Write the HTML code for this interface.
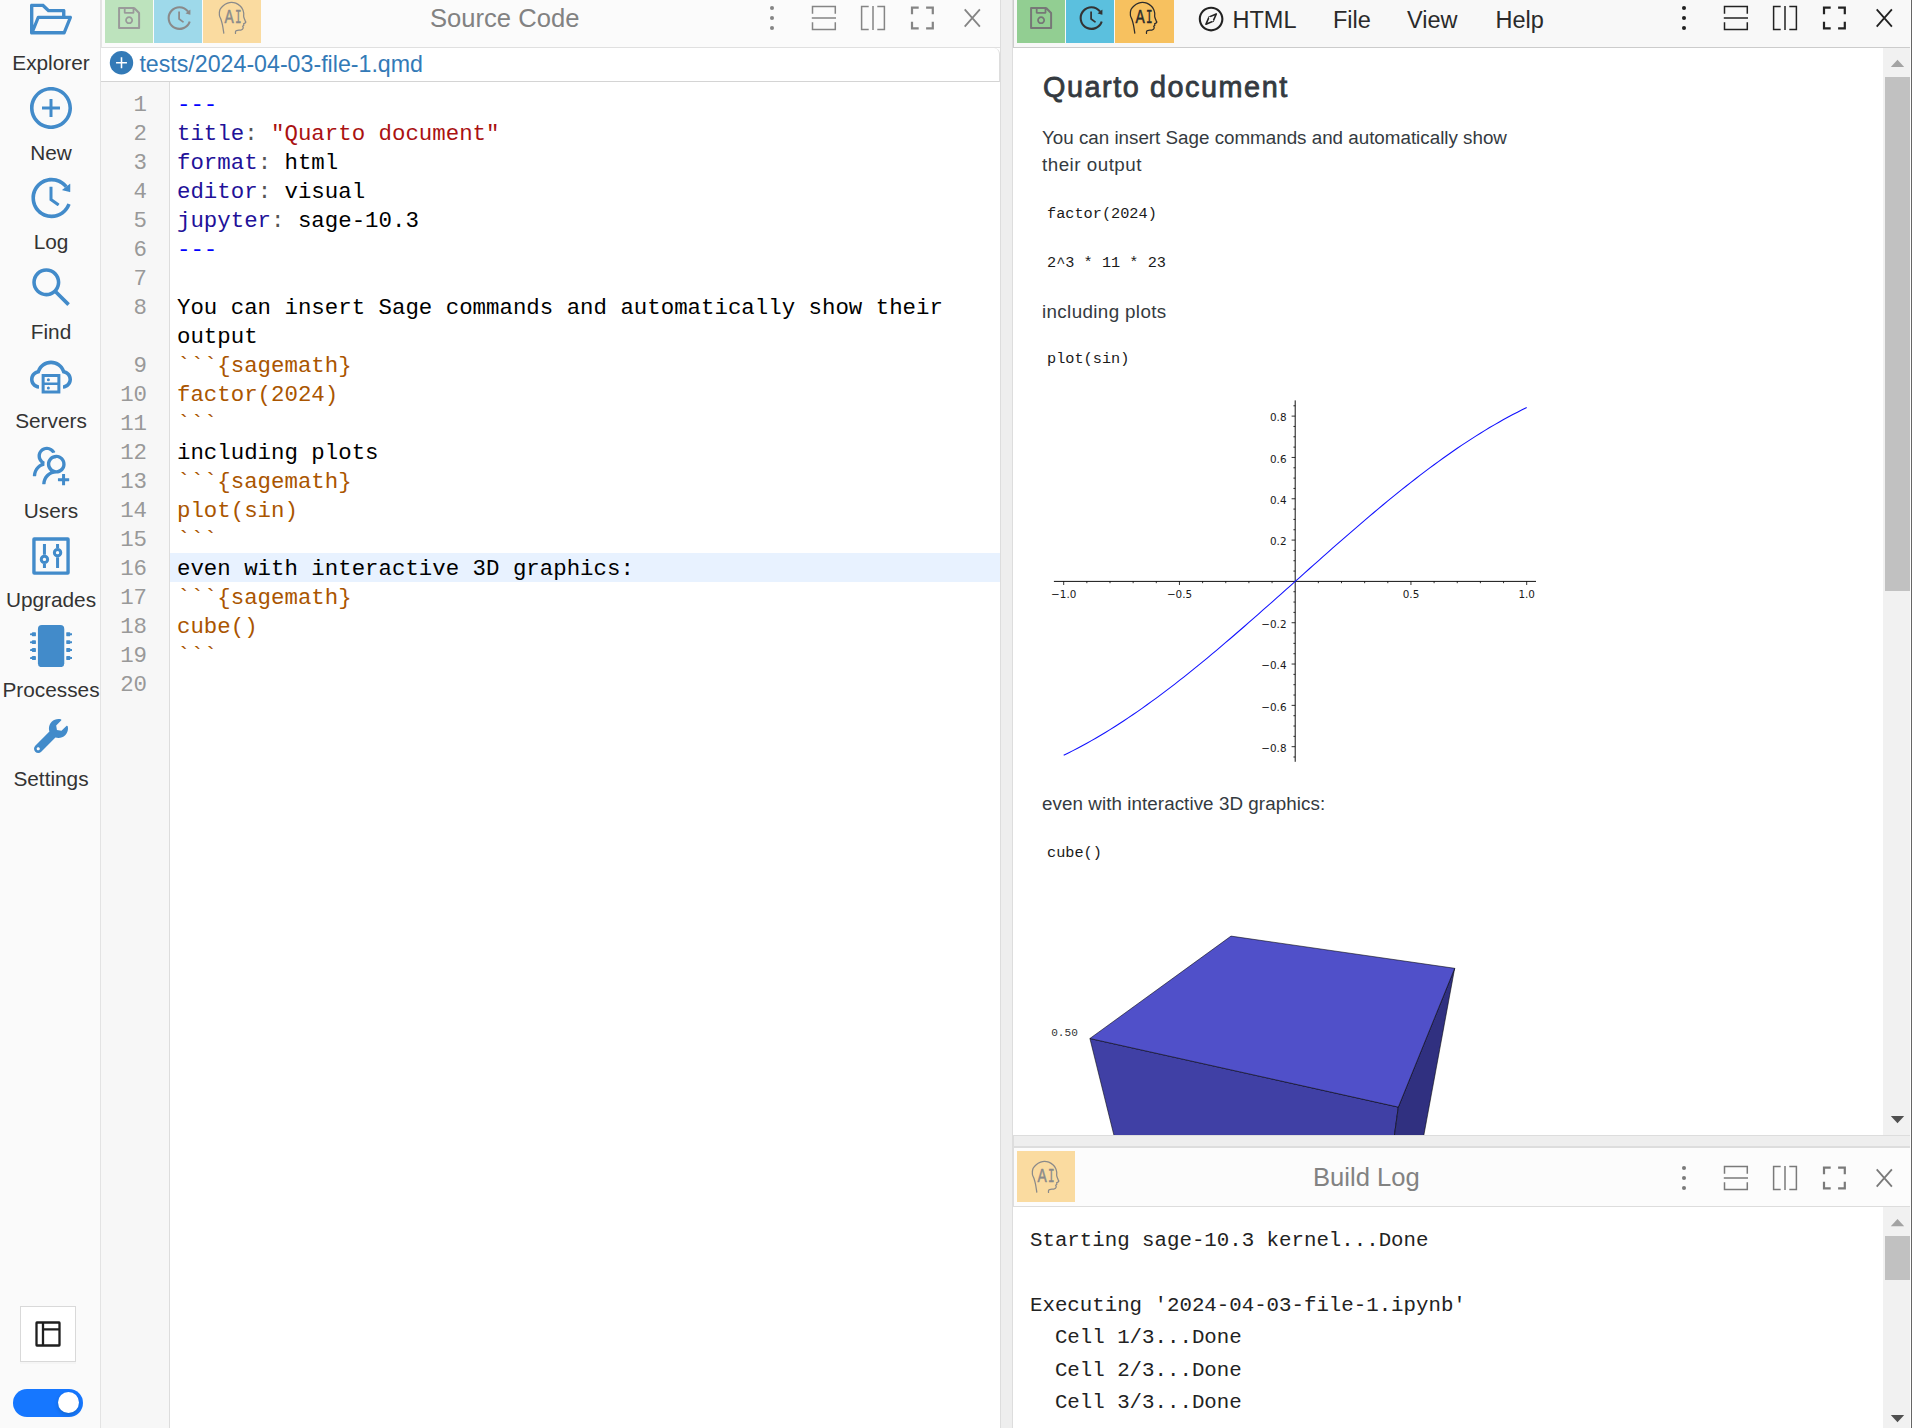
<!DOCTYPE html>
<html lang="en">
<head>
<meta charset="utf-8">
<title>tests/2024-04-03-file-1.qmd</title>
<style>
*{box-sizing:border-box;margin:0;padding:0}
html,body{width:1912px;height:1428px;overflow:hidden;background:#fff}
body{position:relative;font-family:"Liberation Sans",sans-serif;color:#333}
.abs{position:absolute}
/* sidebar */
#side{position:absolute;left:0;top:0;width:101px;height:1428px;background:#fafafa;border-right:1px solid #e3e3e3}
.sb{position:absolute;left:0;width:100px;text-align:center;font-size:20.8px;line-height:24px;color:#333;white-space:nowrap}
.sbi{position:absolute;left:0;width:100px;height:48px}
.sbi svg{position:absolute;left:26px;top:0;width:48px;height:48px;overflow:visible}
/* frames */
.tb{position:absolute;background:#fafafa;border-bottom:1px solid #ccc}
.btn{position:absolute;top:-8px;height:51px}
.ttl{position:absolute;color:#828282;font-size:25.6px;line-height:30px;white-space:nowrap}
.ico{position:absolute;width:30px;height:30px;overflow:visible}
/* editor */
#cm{position:absolute;left:101px;top:82px;width:899px;height:1346px;background:#fff;font-family:"Liberation Mono",monospace;font-size:22.4px}
#gut{position:absolute;left:0;top:0;width:69px;height:1346px;background:#f7f7f7;border-right:1px solid #ddd}
.ln{position:absolute;left:0;width:46px;text-align:right;color:#999;height:29px;line-height:29px;white-space:pre}
.cl{position:absolute;left:76px;height:29px;line-height:29px;white-space:pre;color:#000}
.k{color:#219}.p{color:#555}.s{color:#a11}.m{color:#00f}.c{color:#a50}
/* html preview */
#doc{position:absolute;left:1013px;top:48px;width:870px;height:1087px;background:#fff;overflow:hidden;color:#343a40}
#doc p,#doc h1,#doc pre{position:absolute;white-space:pre}
#doc p{font-size:18.8px;line-height:28px;left:29px}
#doc pre{font-family:"Liberation Mono",monospace;font-size:15.25px;line-height:20px;left:34px;color:#1a1a1a}
.sbar{position:absolute;background:#f1f1f1}
.thumb{position:absolute;background:#c1c1c1}
/* log */
#log{position:absolute;left:1013px;top:1207px;width:870px;height:221px;background:#fff;font-family:"Liberation Mono",monospace;font-size:20.76px;color:#222}
#log div{position:absolute;left:17px;white-space:pre;height:32px;line-height:32px}
</style>
</head>
<body>
<div id="side">
<svg class="abs" style="left:27px;top:-5.4px;width:48px;height:48px" viewBox="0 0 1024 1024" fill="#428bca"><path d="M928 444H820V330.4c0-17.7-14.3-32-32-32H473L355.700 186.200a8.150 8.150 0 00-5.500-2.200H96c-17.700 0-32 14.300-32 32v592c0 17.700 14.300 32 32 32h698c13 0 24.800-7.900 29.700-20l134-332c1.500-3.800 2.300-7.900 2.300-12 0-17.700-14.300-32-32-32zM136 256h188.500l119.600 114.400H748V444H238c-13 0-24.800 7.900-29.700 20L136 643.200V256zm635.300 512H159l103.300-256h612.400L771.300 768z"/></svg>
<div class="sb" style="left:1px;top:51.4px">Explorer</div>
<svg class="abs" style="left:27px;top:84.1px;width:48px;height:48px" viewBox="0 0 1024 1024" fill="#428bca"><path d="M696 480H544V328c0-4.400-3.600-8-8-8h-48c-4.400 0-8 3.600-8 8v152H328c-4.400 0-8 3.600-8 8v48c0 4.400 3.600 8 8 8h152v152c0 4.400 3.600 8 8 8h48c4.400 0 8-3.600 8-8V544h152c4.400 0 8-3.600 8-8v-48c0-4.400-3.600-8-8-8zM512 64C264.600 64 64 264.600 64 512s200.600 448 448 448 448-200.600 448-448S759.400 64 512 64zm0 820c-205.400 0-372-166.600-372-372s166.600-372 372-372 372 166.600 372 372-166.600 372-372 372z"/></svg>
<div class="sb" style="left:1px;top:140.9px">New</div>
<svg class="abs" style="left:27px;top:173.6px;width:48px;height:48px" viewBox="0 0 1024 1024" fill="#428bca"><path d="M536.100 273H488c-4.400 0-8 3.600-8 8v275.300c0 2.600 1.200 5 3.300 6.500l165.300 120.700c3.600 2.600 8.600 1.900 11.200-1.700l28.600-39c2.700-3.700 1.900-8.700-1.700-11.200L544.100 528.500V281c0-4.400-3.600-8-8-8zm219.800 75.200l156.800 38.300c5 1.200 9.900-2.600 9.900-7.700l.800-161.500c0-6.700-7.700-10.500-12.900-6.300L752.900 334.100a8 8 0 003 14.100zm167.700 301.100l-56.700-19.500a8 8 0 00-10.100 4.800c-1.900 5.100-3.900 10.100-6 15.100-17.800 42.100-43.300 80-75.900 112.500a353 353 0 01-112.500 75.900 352.180 352.180 0 01-137.700 27.800c-47.800 0-94.100-9.300-137.700-27.800a353 353 0 01-112.500-75.900c-32.500-32.500-58-70.400-75.900-112.500A353.440 353.440 0 01171 512c0-47.800 9.300-94.200 27.800-137.800 17.800-42.100 43.300-80 75.900-112.500a353 353 0 01112.500-75.900C430.600 167.300 477 158 524.800 158s94.100 9.300 137.700 27.800A353 353 0 01775 261.700c10.200 10.300 19.800 21 28.600 32.300l59.800-46.800C784.700 146.600 662.200 81.900 524.600 82 285 82.100 92.600 276.700 95 516.400 97.400 751.900 288.900 942 524.800 942c185.500 0 343.500-117.600 403.700-282.300 1.500-4.200-.7-8.900-4.900-10.400z"/></svg>
<div class="sb" style="left:1px;top:230.4px">Log</div>
<svg class="abs" style="left:27px;top:263.1px;width:48px;height:48px" viewBox="0 0 1024 1024" fill="#428bca"><path d="M909.600 854.500L649.900 594.800C690.200 542.700 712 479 712 412c0-80.200-31.300-155.400-87.900-212.100-56.600-56.700-132-87.900-212.100-87.900s-155.500 31.300-212.100 87.900C143.200 256.500 112 331.800 112 412c0 80.100 31.300 155.500 87.900 212.100C256.500 680.800 331.800 712 412 712c67 0 130.600-21.800 182.700-62l259.700 259.600a8.200 8.200 0 0011.600 0l43.600-43.500a8.200 8.200 0 000-11.600zM570.400 570.400C528 612.700 471.800 636 412 636s-116-23.300-158.400-65.600C211.300 528 188 471.800 188 412s23.300-116.100 65.600-158.400C296 211.300 352.200 188 412 188s116.100 23.200 158.400 65.600S636 352.200 636 412s-23.300 116.100-65.600 158.400z"/></svg>
<div class="sb" style="left:1px;top:319.9px">Find</div>
<svg class="abs" style="left:27px;top:352.6px;width:48px;height:48px" viewBox="0 0 1024 1024" fill="#428bca"><path d="M704 446H320c-4.400 0-8 3.600-8 8v402c0 4.400 3.600 8 8 8h384c4.400 0 8-3.600 8-8V454c0-4.400-3.600-8-8-8zm-328 64h272v117H376V510zm272 290H376V683h272v117z"/><path d="M424 748a32 32 0 1064 0 32 32 0 10-64 0zm0-178a32 32 0 1064 0 32 32 0 10-64 0z"/><path d="M811.400 368.900C765.600 248 648.900 162 512.200 162S258.800 247.900 213 368.800C126.900 391.500 63.500 470.200 64 563.600 64.600 668 145.600 752.900 247.600 762c4.700.4 8.700-3.300 8.700-8v-60.400c0-4-3-7.400-7-7.900-27-3.400-52.500-15.200-72.100-34.500-24-23.500-37.200-55.100-37.200-88.600 0-28 9.100-54.400 26.200-76.400 16.700-21.400 40.200-36.900 66.100-43.700l37.900-10 13.900-36.700c8.600-22.800 20.600-44.200 35.700-63.500 14.900-19.200 32.600-36 52.400-50 41.100-28.900 89.500-44.200 140-44.200s98.900 15.300 140 44.300c19.900 14 37.500 30.800 52.400 50 15.100 19.300 27.100 40.700 35.700 63.500l13.800 36.600 37.800 10c54.200 14.400 92.100 63.700 92.100 120 0 33.600-13.200 65.100-37.200 88.600-19.500 19.200-44.900 31.100-71.900 34.500-4 .5-6.900 3.900-6.900 7.900V754c0 4.700 4.100 8.400 8.800 8 101.700-9.200 182.500-94 183.200-198.200.6-93.400-62.700-172.100-148.600-194.900z"/></svg>
<div class="sb" style="left:1px;top:409.4px">Servers</div>
<svg class="abs" style="left:27px;top:442.1px;width:48px;height:48px" viewBox="0 0 1024 1024" fill="#428bca"><path d="M892 772h-80v-80c0-4.400-3.600-8-8-8h-48c-4.400 0-8 3.600-8 8v80h-80c-4.400 0-8 3.600-8 8v48c0 4.400 3.600 8 8 8h80v80c0 4.400 3.600 8 8 8h48c4.400 0 8-3.600 8-8v-80h80c4.400 0 8-3.600 8-8v-48c0-4.400-3.600-8-8-8zM373.500 498.400c-.9-8.700-1.400-17.500-1.400-26.400 0-15.900 1.500-31.400 4.300-46.500.7-3.600-1.200-7.300-4.500-8.800-13.600-6.100-26.100-14.500-36.900-25.100a127.540 127.540 0 01-38.700-95.400c.9-32.100 13.800-62.600 36.300-85.600 24.700-25.300 57.900-39.100 93.200-38.700 31.900.3 62.700 12.600 86 34.400 7.900 7.400 14.700 15.600 20.400 24.400 2 3.100 5.900 4.400 9.300 3.200 17.600-6.100 36.200-10.400 55.300-12.400 5.600-.6 8.800-6.600 6.300-11.600-32.500-64.300-98.900-108.700-175.700-109.900-110.800-1.700-203.200 89.200-203.200 200 0 62.800 28.900 118.800 74.200 155.500-31.800 14.700-61.100 35-86.500 60.400-54.800 54.700-85.800 126.900-87.800 204a8 8 0 008 8.200h56.100c4.300 0 7.900-3.400 8-7.700 1.900-58 25.400-112.300 66.700-153.500 29.400-29.400 65.400-49.800 104.700-59.700 3.800-1.100 6.400-4.800 5.900-8.800zM824 472c0-109.400-87.900-198.300-196.900-200C516.300 270.300 424 361.200 424 472c0 62.800 29 118.800 74.200 155.500a300.950 300.950 0 00-86.400 60.400C357 742.600 326 814.800 324 891.800a8 8 0 008 8.200h56c4.300 0 7.900-3.400 8-7.700 1.900-58 25.400-112.300 66.700-153.500C505.800 695.700 563 672 624 672c110.400 0 200-89.500 200-200zm-109.500 90.500C690.300 586.700 658.200 600 624 600s-66.300-13.300-90.500-37.500a127.260 127.260 0 01-37.500-91.800c.3-32.800 13.400-64.500 36.300-88 24-24.600 56.100-38.300 90.400-38.700 33.900-.3 66.800 12.900 91 36.600 24.800 24.300 38.400 56.800 38.400 91.400-.1 34.200-13.400 66.300-37.600 90.500z"/></svg>
<div class="sb" style="left:1px;top:498.9px">Users</div>
<svg class="abs" style="left:27px;top:531.6px;width:48px;height:48px" viewBox="0 0 1024 1024" fill="none" stroke="#428bca" stroke-width="72"><rect x="148" y="148" width="728" height="728" rx="6"/><path d="M372 256V484M372 684V768M652 256V340M652 540V768" stroke-width="64"/><circle cx="372" cy="584" r="68" stroke-width="64"/><circle cx="652" cy="440" r="68" stroke-width="64"/></svg>
<div class="sb" style="left:1px;top:588.4px">Upgrades</div>
<svg class="abs" style="left:29.9px;top:625px;width:42.2px;height:42.2px" viewBox="0 0 512 512" fill="#428bca"><rect x="96" y="0" width="320" height="512" rx="48"/><rect x="440" y="88" width="48" height="48" rx="6"/><rect x="484" y="100" width="28" height="24" rx="6"/><rect x="24" y="88" width="48" height="48" rx="6"/><rect x="0" y="100" width="28" height="24" rx="6"/><rect x="440" y="184" width="48" height="48" rx="6"/><rect x="484" y="196" width="28" height="24" rx="6"/><rect x="24" y="184" width="48" height="48" rx="6"/><rect x="0" y="196" width="28" height="24" rx="6"/><rect x="440" y="280" width="48" height="48" rx="6"/><rect x="484" y="292" width="28" height="24" rx="6"/><rect x="24" y="280" width="48" height="48" rx="6"/><rect x="0" y="292" width="28" height="24" rx="6"/><rect x="440" y="376" width="48" height="48" rx="6"/><rect x="484" y="388" width="28" height="24" rx="6"/><rect x="24" y="376" width="48" height="48" rx="6"/><rect x="0" y="388" width="28" height="24" rx="6"/></svg>
<div class="sb" style="left:1px;top:677.9px">Processes</div>
<svg class="abs" style="left:34.3px;top:719.1px;width:34px;height:34px" viewBox="0 0 512 512" fill="#428bca"><path d="M507.730 109.100c-2.240-9.030-13.540-12.090-20.120-5.510l-74.360 74.360-67.880-11.310-11.310-67.880 74.360-74.360c6.620-6.620 3.430-17.900-5.660-20.160-47.380-11.740-99.550.91-136.580 37.930-39.640 39.640-50.550 97.100-34.050 147.200L18.740 402.760c-24.990 24.990-24.990 65.510 0 90.500 24.990 24.990 65.510 24.990 90.500 0l213.210-213.210c50.120 16.710 107.470 5.680 147.370-34.220 37.070-37.070 49.700-89.320 37.910-136.730zM64 472c-13.250 0-24-10.750-24-24 0-13.260 10.750-24 24-24s24 10.740 24 24c0 13.250-10.750 24-24 24z"/></svg>
<div class="sb" style="left:1px;top:767.4px">Settings</div>
<div class="abs" style="left:20px;top:1306px;width:56px;height:56px;background:#fff;border:1px solid #d9d9d9;box-shadow:0 2px 0 rgba(0,0,0,0.02)"></div>
<svg class="abs" style="left:35px;top:1321px;width:26px;height:26px" viewBox="0 0 26 26" fill="none" stroke="#1f1f1f" stroke-width="2.300"><rect x="1.5" y="1.500" width="23" height="23" rx="0.400"/><path d="M8 1.5V24.500M8 8.300H24.500"/></svg>
<div class="abs" style="left:13px;top:1389px;width:70px;height:28px;border-radius:14px;background:#1677ff"></div>
<div class="abs" style="left:58px;top:1391.700px;width:21px;height:21px;border-radius:11px;background:#fff;box-shadow:0 2px 4px rgba(0,35,11,0.2)"></div>
</div>
<div class="tb" style="left:101px;top:0;width:899px;height:48px;background:#fbfbfb;border-bottom:1px solid #e0e0e0;border-left:1px solid #e4e4e4"></div>
<div class="abs" style="left:105px;top:-8px;width:48px;height:51px;background:#bde3bd"></div>
<div class="abs" style="left:154px;top:-8px;width:48px;height:51px;background:#9ed9ea"></div>
<div class="abs" style="left:203px;top:-8px;width:58px;height:51px;background:#fadba0"></div>
<svg class="abs" style="left:115px;top:4px;width:28.2px;height:28.2px" viewBox="0 0 1024 1024" fill="#9a9a9a"><path d="M893.300 293.300L730.700 130.700c-7.500-7.500-16.700-13-26.700-16V112H144c-17.700 0-32 14.300-32 32v736c0 17.700 14.300 32 32 32h736c17.700 0 32-14.300 32-32V338.500c0-17-6.700-33.200-18.700-45.200zM384 184h256v104H384V184zm456 656H184V184h136v136c0 17.700 14.300 32 32 32h320c17.700 0 32-14.300 32-32V205.800l136 136V840zM512 442c-79.500 0-144 64.500-144 144s64.500 144 144 144 144-64.500 144-144-64.500-144-144-144zm0 224c-44.200 0-80-35.800-80-80s35.800-80 80-80 80 35.800 80 80-35.800 80-80 80z"/></svg>
<svg class="abs" style="left:164.5px;top:4.1px;width:28.2px;height:28.2px" viewBox="0 0 1024 1024" fill="#8a8a8a"><path d="M536.100 273H488c-4.400 0-8 3.600-8 8v275.300c0 2.600 1.200 5 3.300 6.500l165.300 120.700c3.600 2.600 8.600 1.900 11.200-1.700l28.600-39c2.700-3.700 1.900-8.700-1.700-11.200L544.100 528.500V281c0-4.400-3.600-8-8-8zm219.800 75.200l156.800 38.300c5 1.200 9.900-2.600 9.900-7.700l.800-161.500c0-6.700-7.700-10.500-12.900-6.300L752.900 334.100a8 8 0 003 14.100zm167.700 301.100l-56.700-19.500a8 8 0 00-10.100 4.800c-1.900 5.100-3.900 10.100-6 15.100-17.800 42.100-43.300 80-75.900 112.500a353 353 0 01-112.500 75.900 352.180 352.180 0 01-137.700 27.800c-47.800 0-94.100-9.300-137.700-27.800a353 353 0 01-112.500-75.900c-32.500-32.500-58-70.400-75.900-112.500A353.440 353.440 0 01171 512c0-47.800 9.300-94.200 27.800-137.800 17.800-42.100 43.300-80 75.900-112.500a353 353 0 01112.500-75.900C430.600 167.300 477 158 524.800 158s94.100 9.300 137.700 27.800A353 353 0 01775 261.700c10.200 10.300 19.800 21 28.600 32.300l59.800-46.800C784.700 146.600 662.200 81.900 524.600 82 285 82.100 92.600 276.700 95 516.400 97.400 751.900 288.900 942 524.800 942c185.500 0 343.500-117.600 403.700-282.300 1.500-4.200-.7-8.900-4.900-10.400z"/></svg>
<svg class="abs" style="left:202.8px;top:0px;width:60px;height:45px;overflow:visible" viewBox="0 0 60 45" fill="none" stroke="#8a8a8a" stroke-width="1.25" stroke-linecap="round" stroke-linejoin="round"><path d="M20.80 33.10C20.58 31.78 19.97 27.47 19.50 25.20C19.03 22.93 18.52 21.15 18.00 19.50C17.48 17.85 16.57 16.97 16.40 15.30C16.23 13.63 16.37 11.10 17.00 9.50C17.63 7.90 18.93 6.75 20.20 5.70C21.47 4.65 23.23 3.75 24.60 3.20C25.97 2.65 27.03 2.40 28.40 2.40C29.77 2.40 31.33 2.60 32.80 3.20C34.27 3.80 36.05 4.95 37.20 6.00C38.35 7.05 39.12 8.30 39.70 9.50C40.28 10.70 40.53 12.00 40.70 13.20C40.87 14.40 40.53 15.65 40.70 16.70C40.87 17.75 41.37 18.60 41.70 19.50C42.03 20.40 42.53 21.67 42.70 22.10"/><path d="M42.70 22.10C42.60 22.27 42.43 22.85 42.10 23.10C41.77 23.35 40.92 23.25 40.70 23.60C40.48 23.95 40.97 24.77 40.80 25.20C40.63 25.63 39.80 25.78 39.70 26.20C39.60 26.62 40.25 27.18 40.20 27.70C40.15 28.22 39.80 28.90 39.40 29.30C39.00 29.70 38.58 29.93 37.80 30.10C37.02 30.27 35.48 30.20 34.70 30.30C33.92 30.40 33.47 30.45 33.10 30.70C32.73 30.95 32.60 31.35 32.50 31.80C32.40 32.25 32.50 33.13 32.50 33.40"/><g font-family="Liberation Mono,monospace" font-size="20.300" font-weight="400" fill="#8a8a8a" stroke="#8a8a8a" stroke-width="0.450"><text transform="translate(21.5,22.5) scale(0.760,1)">A</text><text transform="translate(32.1,22.5) scale(0.540,1)">I</text></g></svg>
<div class="ttl" style="left:430px;top:3px">Source Code</div>
<svg class="abs" style="left:760.2px;top:0.1999999999999993px;width:232px;height:36px;overflow:visible" viewBox="0 0 232 36" fill="none" stroke="#858585" stroke-width="1.5"><circle cx="12" cy="8" r="2.050" fill="#858585" stroke="none"/><circle cx="12" cy="18" r="2.050" fill="#858585" stroke="none"/><circle cx="12" cy="28" r="2.050" fill="#858585" stroke="none"/><path d="M52.5 13.7V6.6H75.3V13.7M51.8 18H76.0M52.5 22.3V29.4H75.3V22.3"/><path d="M108.7 6.6H101.6V29.4H108.7M113 5.9V30.1M117.3 6.6H124.4V29.4H117.3"/><path stroke-width="2.200" d="M152.0 14.3V7.6H158.70000000000002M166.1 7.6H172.8V14.3M172.8 21.7V28.4H166.1M158.70000000000002 28.4H152.0V21.7"/><path stroke-width="1.800" d="M204.70000000000002 9.3L219.9 26.7M219.9 9.3L204.70000000000002 26.7"/></svg>
<div class="abs" style="left:101px;top:48px;width:899px;height:34px;background:#fff;border-bottom:1px solid #d4d4d4;border-right:1px solid #ddd;border-top-right-radius:6px"></div>
<svg class="abs" style="left:105px;top:46px;width:40px;height:34px" viewBox="0 0 40 34"><circle cx="16.500" cy="16.750" r="11.700" fill="#337ab7"/><path d="M16.500 11.300V22.200M11.050 16.750H21.950" stroke="#fff" stroke-width="1.550" fill="none"/></svg>

<div class="abs" style="left:139.400px;top:49px;font-size:23.200px;line-height:30px;color:#337ab7;white-space:nowrap">tests/2024-04-03-file-1.qmd</div>
<div id="cm"><div id="gut"></div>
<div class="ln" style="top:9.2px">1</div>
<div class="cl" style="top:9.2px"><span class="m">---</span></div>
<div class="ln" style="top:38.2px">2</div>
<div class="cl" style="top:38.2px"><span class="k">title</span><span class="p">:</span> <span class="s">"Quarto document"</span></div>
<div class="ln" style="top:67.2px">3</div>
<div class="cl" style="top:67.2px"><span class="k">format</span><span class="p">:</span> html</div>
<div class="ln" style="top:96.2px">4</div>
<div class="cl" style="top:96.2px"><span class="k">editor</span><span class="p">:</span> visual</div>
<div class="ln" style="top:125.2px">5</div>
<div class="cl" style="top:125.2px"><span class="k">jupyter</span><span class="p">:</span> sage-10.3</div>
<div class="ln" style="top:154.2px">6</div>
<div class="cl" style="top:154.2px"><span class="m">---</span></div>
<div class="ln" style="top:183.2px">7</div>
<div class="ln" style="top:212.2px">8</div>
<div class="cl" style="top:212.2px">You can insert Sage commands and automatically show their</div>
<div class="cl" style="top:241.2px">output</div>
<div class="ln" style="top:270.2px">9</div>
<div class="cl" style="top:270.2px"><span class="c">```{sagemath}</span></div>
<div class="ln" style="top:299.2px">10</div>
<div class="cl" style="top:299.2px"><span class="c">factor(2024)</span></div>
<div class="ln" style="top:328.2px">11</div>
<div class="cl" style="top:328.2px"><span class="c">```</span></div>
<div class="ln" style="top:357.2px">12</div>
<div class="cl" style="top:357.2px">including plots</div>
<div class="ln" style="top:386.2px">13</div>
<div class="cl" style="top:386.2px"><span class="c">```{sagemath}</span></div>
<div class="ln" style="top:415.2px">14</div>
<div class="cl" style="top:415.2px"><span class="c">plot(sin)</span></div>
<div class="ln" style="top:444.2px">15</div>
<div class="cl" style="top:444.2px"><span class="c">```</span></div>
<div class="abs" style="left:69px;top:471.2px;width:830px;height:28.600px;background:#e8f2ff"></div>
<div class="ln" style="top:473.2px">16</div>
<div class="cl" style="top:473.2px">even with interactive 3D graphics:</div>
<div class="ln" style="top:502.2px">17</div>
<div class="cl" style="top:502.2px"><span class="c">```{sagemath}</span></div>
<div class="ln" style="top:531.2px">18</div>
<div class="cl" style="top:531.2px"><span class="c">cube()</span></div>
<div class="ln" style="top:560.2px">19</div>
<div class="cl" style="top:560.2px"><span class="c">```</span></div>
<div class="ln" style="top:589.2px">20</div>
</div>
<div class="abs" style="left:1000px;top:0;width:13px;height:1428px;background:#eeeeee;border-left:1px solid #dddddd;border-right:1px solid #dddddd"></div>
<div class="tb" style="left:1013px;top:0;width:899px;height:48px;background:#f8f8f8;border-left:1px solid #ccc"></div>
<div class="abs" style="left:1017px;top:-8px;width:48px;height:51px;background:#92ce92"></div>
<div class="abs" style="left:1066px;top:-8px;width:48px;height:51px;background:#5bc0de"></div>
<div class="abs" style="left:1115px;top:-8px;width:59px;height:51px;background:#f7c15f"></div>
<svg class="abs" style="left:1027px;top:4px;width:28.2px;height:28.2px" viewBox="0 0 1024 1024" fill="#777"><path d="M893.300 293.300L730.700 130.700c-7.500-7.500-16.700-13-26.700-16V112H144c-17.700 0-32 14.300-32 32v736c0 17.700 14.300 32 32 32h736c17.700 0 32-14.300 32-32V338.500c0-17-6.700-33.200-18.700-45.200zM384 184h256v104H384V184zm456 656H184V184h136v136c0 17.700 14.300 32 32 32h320c17.700 0 32-14.300 32-32V205.800l136 136V840zM512 442c-79.500 0-144 64.500-144 144s64.500 144 144 144 144-64.500 144-144-64.500-144-144-144zm0 224c-44.200 0-80-35.800-80-80s35.800-80 80-80 80 35.800 80 80-35.800 80-80 80z"/></svg>
<svg class="abs" style="left:1076.5px;top:4.1px;width:28.2px;height:28.2px" viewBox="0 0 1024 1024" fill="#333"><path d="M536.100 273H488c-4.400 0-8 3.600-8 8v275.300c0 2.600 1.200 5 3.300 6.500l165.300 120.700c3.600 2.600 8.600 1.900 11.200-1.700l28.600-39c2.700-3.700 1.900-8.700-1.700-11.200L544.100 528.500V281c0-4.400-3.600-8-8-8zm219.800 75.200l156.800 38.300c5 1.200 9.900-2.600 9.900-7.700l.800-161.500c0-6.700-7.700-10.500-12.900-6.300L752.900 334.100a8 8 0 003 14.100zm167.700 301.100l-56.700-19.500a8 8 0 00-10.100 4.800c-1.900 5.100-3.900 10.100-6 15.100-17.800 42.100-43.300 80-75.900 112.500a353 353 0 01-112.500 75.900 352.180 352.180 0 01-137.700 27.800c-47.800 0-94.100-9.300-137.700-27.800a353 353 0 01-112.500-75.900c-32.500-32.500-58-70.400-75.900-112.500A353.440 353.440 0 01171 512c0-47.800 9.300-94.200 27.800-137.800 17.800-42.100 43.300-80 75.900-112.500a353 353 0 01112.500-75.900C430.600 167.300 477 158 524.800 158s94.100 9.300 137.700 27.800A353 353 0 01775 261.700c10.200 10.300 19.800 21 28.600 32.300l59.800-46.800C784.700 146.600 662.200 81.900 524.600 82 285 82.100 92.600 276.700 95 516.400 97.400 751.900 288.900 942 524.800 942c185.500 0 343.500-117.600 403.700-282.300 1.500-4.200-.7-8.900-4.900-10.400z"/></svg>
<svg class="abs" style="left:1114px;top:0px;width:60px;height:45px;overflow:visible" viewBox="0 0 60 45" fill="none" stroke="#2b2b2b" stroke-width="1.25" stroke-linecap="round" stroke-linejoin="round"><path d="M20.80 33.10C20.58 31.78 19.97 27.47 19.50 25.20C19.03 22.93 18.52 21.15 18.00 19.50C17.48 17.85 16.57 16.97 16.40 15.30C16.23 13.63 16.37 11.10 17.00 9.50C17.63 7.90 18.93 6.75 20.20 5.70C21.47 4.65 23.23 3.75 24.60 3.20C25.97 2.65 27.03 2.40 28.40 2.40C29.77 2.40 31.33 2.60 32.80 3.20C34.27 3.80 36.05 4.95 37.20 6.00C38.35 7.05 39.12 8.30 39.70 9.50C40.28 10.70 40.53 12.00 40.70 13.20C40.87 14.40 40.53 15.65 40.70 16.70C40.87 17.75 41.37 18.60 41.70 19.50C42.03 20.40 42.53 21.67 42.70 22.10"/><path d="M42.70 22.10C42.60 22.27 42.43 22.85 42.10 23.10C41.77 23.35 40.92 23.25 40.70 23.60C40.48 23.95 40.97 24.77 40.80 25.20C40.63 25.63 39.80 25.78 39.70 26.20C39.60 26.62 40.25 27.18 40.20 27.70C40.15 28.22 39.80 28.90 39.40 29.30C39.00 29.70 38.58 29.93 37.80 30.10C37.02 30.27 35.48 30.20 34.70 30.30C33.92 30.40 33.47 30.45 33.10 30.70C32.73 30.95 32.60 31.35 32.50 31.80C32.40 32.25 32.50 33.13 32.50 33.40"/><g font-family="Liberation Mono,monospace" font-size="20.300" font-weight="400" fill="#2b2b2b" stroke="#2b2b2b" stroke-width="0.450"><text transform="translate(21.5,22.5) scale(0.760,1)">A</text><text transform="translate(32.1,22.5) scale(0.540,1)">I</text></g></svg>
<svg class="abs" style="left:1197.1px;top:5.3px;width:28.2px;height:28.2px" viewBox="0 0 1024 1024" fill="#222"><path d="M512 64C264.600 64 64 264.600 64 512s200.600 448 448 448 448-200.600 448-448S759.400 64 512 64zm0 820c-205.400 0-372-166.600-372-372s166.600-372 372-372 372 166.600 372 372-166.600 372-372 372zm198.400-588.100a32 32 0 00-24.500.5L414.900 415 296.400 686c-3.600 8.200-3.600 17.500 0 25.700 3.400 7.800 9.700 13.900 17.700 17 3.800 1.500 7.700 2.200 11.700 2.200 4.400 0 8.700-.9 12.800-2.700l271-118.600 118.500-271a32.060 32.060 0 00-17.700-42.700zM576.800 534.400l26.200 26.200-42.400 42.400-26.200-26.200L380 644.400 447.500 490 422 464.400l42.400-42.400 25.500 25.500L644.400 380l-67.600 154.400z"/></svg>
<div class="abs" style="left:1232.5px;top:5.400px;font-size:23.500px;line-height:30px;color:#2a2a2a;white-space:nowrap">HTML</div>
<div class="abs" style="left:1333px;top:5.400px;font-size:23.500px;line-height:30px;color:#2a2a2a;white-space:nowrap">File</div>
<div class="abs" style="left:1407px;top:5.400px;font-size:23.500px;line-height:30px;color:#2a2a2a;white-space:nowrap">View</div>
<div class="abs" style="left:1495.5px;top:5.400px;font-size:23.500px;line-height:30px;color:#2a2a2a;white-space:nowrap">Help</div>
<svg class="abs" style="left:1672.1px;top:0.1999999999999993px;width:232px;height:36px;overflow:visible" viewBox="0 0 232 36" fill="none" stroke="#222" stroke-width="1.5"><circle cx="12" cy="8" r="2.050" fill="#222" stroke="none"/><circle cx="12" cy="18" r="2.050" fill="#222" stroke="none"/><circle cx="12" cy="28" r="2.050" fill="#222" stroke="none"/><path d="M52.5 13.7V6.6H75.3V13.7M51.8 18H76.0M52.5 22.3V29.4H75.3V22.3"/><path d="M108.7 6.6H101.6V29.4H108.7M113 5.9V30.1M117.3 6.6H124.4V29.4H117.3"/><path stroke-width="2.200" d="M152.0 14.3V7.6H158.70000000000002M166.1 7.6H172.8V14.3M172.8 21.7V28.4H166.1M158.70000000000002 28.4H152.0V21.7"/><path stroke-width="1.800" d="M204.70000000000002 9.3L219.9 26.7M219.9 9.3L204.70000000000002 26.7"/></svg>
<div id="doc">
<h1 style="left:30px;top:18.500px;font-size:28.800px;line-height:40px;font-weight:400;-webkit-text-stroke:0.8px #343a40;letter-spacing:1.55px">Quarto document</h1>
<p style="top:75.600px">You can insert Sage commands and automatically show</p>
<p style="top:103.400px;letter-spacing:0.5px">their output</p>
<pre style="top:155.500px">factor(2024)</pre>
<pre style="top:205.300px">2^3 * 11 * 23</pre>
<p style="top:249.700px;letter-spacing:0.37px">including plots</p>
<pre style="top:300.800px">plot(sin)</pre>
<svg class="abs" style="left:27px;top:347px;width:510px;height:375px" viewBox="0 0 510 375" font-family="DejaVu Sans, sans-serif" font-size="10.400" fill="#1a1a1a"><path d="M13.900000000000091 186.39999999999998H496M255.20000000000005 5.399999999999977V366.79999999999995" stroke="#111" stroke-width="1" fill="none"/><path d="M23.70 186.39999999999998v3.6M46.85 186.39999999999998v1.8M70.00 186.39999999999998v1.8M93.15 186.39999999999998v1.8M116.30 186.39999999999998v1.8M139.45 186.39999999999998v3.6M162.60 186.39999999999998v1.8M185.75 186.39999999999998v1.8M208.90 186.39999999999998v1.8M232.05 186.39999999999998v1.8M278.35 186.39999999999998v1.8M301.50 186.39999999999998v1.8M324.65 186.39999999999998v1.8M347.80 186.39999999999998v1.8M370.95 186.39999999999998v3.6M394.10 186.39999999999998v1.8M417.25 186.39999999999998v1.8M440.40 186.39999999999998v1.8M463.55 186.39999999999998v1.8M486.70 186.39999999999998v3.6M255.20000000000005 362.01h-1.8M255.20000000000005 351.68h-3.6M255.20000000000005 341.35h-1.8M255.20000000000005 331.02h-1.8M255.20000000000005 320.69h-1.8M255.20000000000005 310.36h-3.6M255.20000000000005 300.03h-1.8M255.20000000000005 289.70h-1.8M255.20000000000005 279.37h-1.8M255.20000000000005 269.04h-3.6M255.20000000000005 258.71h-1.8M255.20000000000005 248.38h-1.8M255.20000000000005 238.05h-1.8M255.20000000000005 227.72h-3.6M255.20000000000005 217.39h-1.8M255.20000000000005 207.06h-1.8M255.20000000000005 196.73h-1.8M255.20000000000005 176.07h-1.8M255.20000000000005 165.74h-1.8M255.20000000000005 155.41h-1.8M255.20000000000005 145.08h-3.6M255.20000000000005 134.75h-1.8M255.20000000000005 124.42h-1.8M255.20000000000005 114.09h-1.8M255.20000000000005 103.76h-3.6M255.20000000000005 93.43h-1.8M255.20000000000005 83.10h-1.8M255.20000000000005 72.77h-1.8M255.20000000000005 62.44h-3.6M255.20000000000005 52.11h-1.8M255.20000000000005 41.78h-1.8M255.20000000000005 31.45h-1.8M255.20000000000005 21.12h-3.6M255.20000000000005 10.79h-1.8" stroke="#000" stroke-width="0.800" fill="none"/><text x="23.7" y="203.3" text-anchor="middle">−1.0</text><text x="139.5" y="203.3" text-anchor="middle">−0.5</text><text x="371.0" y="203.3" text-anchor="middle">0.5</text><text x="486.7" y="203.3" text-anchor="middle">1.0</text><text x="246.5" y="26.2" text-anchor="end">0.8</text><text x="246.5" y="67.5" text-anchor="end">0.6</text><text x="246.5" y="108.9" text-anchor="end">0.4</text><text x="246.5" y="150.2" text-anchor="end">0.2</text><text x="246.5" y="232.8" text-anchor="end">−0.2</text><text x="246.5" y="274.1" text-anchor="end">−0.4</text><text x="246.5" y="315.5" text-anchor="end">−0.6</text><text x="246.5" y="356.8" text-anchor="end">−0.8</text><path d="M23.70 360.25L28.33 357.98L32.96 355.64L37.59 353.24L42.22 350.77L46.85 348.24L51.48 345.63L56.11 342.97L60.74 340.24L65.37 337.45L70.00 334.61L74.63 331.70L79.26 328.73L83.89 325.71L88.52 322.63L93.15 319.50L97.78 316.31L102.41 313.07L107.04 309.78L111.67 306.44L116.30 303.06L120.93 299.62L125.56 296.14L130.19 292.62L134.82 289.06L139.45 285.45L144.08 281.80L148.71 278.12L153.34 274.40L157.97 270.64L162.60 266.85L167.23 263.03L171.86 259.18L176.49 255.30L181.12 251.39L185.75 247.45L190.38 243.50L195.01 239.51L199.64 235.51L204.27 231.49L208.90 227.45L213.53 223.39L218.16 219.32L222.79 215.23L227.42 211.13L232.05 207.03L236.68 202.91L241.31 198.79L245.94 194.66L250.57 190.53L255.20 186.40L259.83 182.27L264.46 178.14L269.09 174.01L273.72 169.89L278.35 165.77L282.98 161.67L287.61 157.57L292.24 153.48L296.87 149.41L301.50 145.35L306.13 141.31L310.76 137.29L315.39 133.29L320.02 129.30L324.65 125.35L329.28 121.41L333.91 117.50L338.54 113.62L343.17 109.77L347.80 105.95L352.43 102.16L357.06 98.40L361.69 94.68L366.32 91.00L370.95 87.35L375.58 83.74L380.21 80.18L384.84 76.66L389.47 73.18L394.10 69.74L398.73 66.36L403.36 63.02L407.99 59.73L412.62 56.49L417.25 53.30L421.88 50.17L426.51 47.09L431.14 44.07L435.77 41.10L440.40 38.19L445.03 35.35L449.66 32.56L454.29 29.83L458.92 27.17L463.55 24.56L468.18 22.03L472.81 19.56L477.44 17.16L482.07 14.82L486.70 12.55" stroke="#1010ff" stroke-width="1.050" fill="none"/></svg>
<p style="top:741.600px;letter-spacing:0.07px">even with interactive 3D graphics:</p>
<pre style="top:795.300px">cube()</pre>
<svg class="abs" style="left:27px;top:872px;width:440px;height:215px" viewBox="0 0 440 215" stroke="#000" stroke-width="0.550" stroke-linejoin="round"><path d="M49.9 118.5L358.3 187.1L354.3 216.0L74.1 216.0Z" fill="#4040a5"/><path d="M358.3 187.1L414.7 48.3L383.7 216.0L354.3 216.0Z" fill="#303080"/><path d="M191.0 16.1L414.7 48.3L358.3 187.1L49.9 118.5Z" fill="#5050c9"/><text x="11.200000000000045" y="116.20000000000005" stroke="none" fill="#333" font-family="Liberation Mono, monospace" font-size="11.100">0.50</text></svg>
</div>
<div class="sbar" style="left:1883px;top:48px;width:27px;height:1087px"></div>
<div class="thumb" style="left:1885px;top:77px;width:25px;height:514px"></div>
<svg class="abs" style="left:0;top:0;width:1912px;height:1428px;pointer-events:none" viewBox="0 0 1912 1428"><path d="M1890.8 67.0L1897.5 59.8L1904.2 67.0Z" fill="#a3a3a3"/></svg>
<svg class="abs" style="left:0;top:0;width:1912px;height:1428px;pointer-events:none" viewBox="0 0 1912 1428"><path d="M1890.8 1116L1897.5 1123.2L1904.2 1116Z" fill="#505050"/></svg>
<div class="abs" style="left:1013px;top:1135px;width:899px;height:12px;background:#eeeeee;border-top:1px solid #dddddd;border-bottom:1px solid #dddddd;border-left:1px solid #dddddd"></div>
<div class="tb" style="left:1013px;top:1147px;width:899px;height:60px;background:#fcfcfc;border-bottom:1px solid #ddd;border-left:1px solid #ddd;border-top:1px solid #ddd"></div>
<div class="abs" style="left:1017px;top:1151px;width:57.500px;height:51px;background:#fadba0"></div>
<svg class="abs" style="left:1016px;top:1159px;width:60px;height:45px;overflow:visible" viewBox="0 0 60 45" fill="none" stroke="#8a8a8a" stroke-width="1.25" stroke-linecap="round" stroke-linejoin="round"><path d="M20.80 33.10C20.58 31.78 19.97 27.47 19.50 25.20C19.03 22.93 18.52 21.15 18.00 19.50C17.48 17.85 16.57 16.97 16.40 15.30C16.23 13.63 16.37 11.10 17.00 9.50C17.63 7.90 18.93 6.75 20.20 5.70C21.47 4.65 23.23 3.75 24.60 3.20C25.97 2.65 27.03 2.40 28.40 2.40C29.77 2.40 31.33 2.60 32.80 3.20C34.27 3.80 36.05 4.95 37.20 6.00C38.35 7.05 39.12 8.30 39.70 9.50C40.28 10.70 40.53 12.00 40.70 13.20C40.87 14.40 40.53 15.65 40.70 16.70C40.87 17.75 41.37 18.60 41.70 19.50C42.03 20.40 42.53 21.67 42.70 22.10"/><path d="M42.70 22.10C42.60 22.27 42.43 22.85 42.10 23.10C41.77 23.35 40.92 23.25 40.70 23.60C40.48 23.95 40.97 24.77 40.80 25.20C40.63 25.63 39.80 25.78 39.70 26.20C39.60 26.62 40.25 27.18 40.20 27.70C40.15 28.22 39.80 28.90 39.40 29.30C39.00 29.70 38.58 29.93 37.80 30.10C37.02 30.27 35.48 30.20 34.70 30.30C33.92 30.40 33.47 30.45 33.10 30.70C32.73 30.95 32.60 31.35 32.50 31.80C32.40 32.25 32.50 33.13 32.50 33.40"/><g font-family="Liberation Mono,monospace" font-size="20.300" font-weight="400" fill="#8a8a8a" stroke="#8a8a8a" stroke-width="0.450"><text transform="translate(21.5,22.5) scale(0.760,1)">A</text><text transform="translate(32.1,22.5) scale(0.540,1)">I</text></g></svg>
<div class="ttl" style="left:1313px;top:1162px">Build Log</div>
<svg class="abs" style="left:1672.1px;top:1159.5px;width:232px;height:36px;overflow:visible" viewBox="0 0 232 36" fill="none" stroke="#7a7a7a" stroke-width="1.5"><circle cx="12" cy="8" r="2.050" fill="#7a7a7a" stroke="none"/><circle cx="12" cy="18" r="2.050" fill="#7a7a7a" stroke="none"/><circle cx="12" cy="28" r="2.050" fill="#7a7a7a" stroke="none"/><path d="M52.5 13.7V6.6H75.3V13.7M51.8 18H76.0M52.5 22.3V29.4H75.3V22.3"/><path d="M108.7 6.6H101.6V29.4H108.7M113 5.9V30.1M117.3 6.6H124.4V29.4H117.3"/><path stroke-width="2.200" d="M152.0 14.3V7.6H158.70000000000002M166.1 7.6H172.8V14.3M172.8 21.7V28.4H166.1M158.70000000000002 28.4H152.0V21.7"/><path stroke-width="1.800" d="M204.70000000000002 9.3L219.9 26.7M219.9 9.3L204.70000000000002 26.7"/></svg>
<div id="log">
<div style="top:18.10px">Starting sage-10.3 kernel...Done</div>
<div style="top:82.96px">Executing '2024-04-03-file-1.ipynb'</div>
<div style="top:115.39px">  Cell 1/3...Done</div>
<div style="top:147.82px">  Cell 2/3...Done</div>
<div style="top:180.25px">  Cell 3/3...Done</div>
</div>
<div class="sbar" style="left:1883px;top:1207px;width:27px;height:221px"></div>
<div class="thumb" style="left:1885px;top:1236px;width:25px;height:44px"></div>
<svg class="abs" style="left:0;top:0;width:1912px;height:1428px;pointer-events:none" viewBox="0 0 1912 1428"><path d="M1890.8 1226.2L1897.5 1219L1904.2 1226.2Z" fill="#a3a3a3"/></svg>
<svg class="abs" style="left:0;top:0;width:1912px;height:1428px;pointer-events:none" viewBox="0 0 1912 1428"><path d="M1890.8 1415L1897.5 1422.2L1904.2 1415Z" fill="#505050"/></svg>
<div class="abs" style="left:1910px;top:0;width:2px;height:1428px;background:#fcfcfc;border-right:1px solid #666"></div>
</body>
</html>
